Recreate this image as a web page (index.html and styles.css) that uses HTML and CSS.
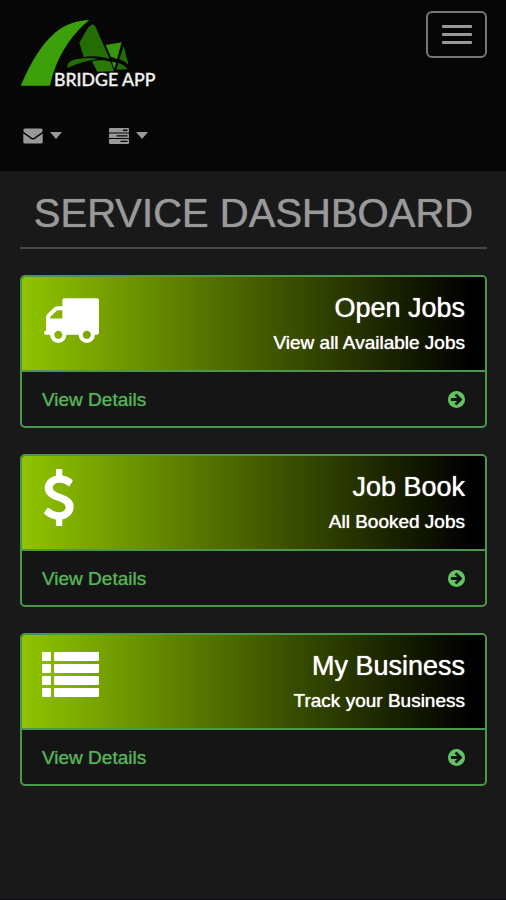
FILE: index.html
```html
<!DOCTYPE html>
<html lang="en">
<head>
  <meta charset="UTF-8">
  <meta name="viewport" content="width=device-width, initial-scale=1.0">
  <title>Bridge App - Service Dashboard</title>
  <link rel="stylesheet" href="styles.css">
</head>
<body>
  <!-- Shared icons -->
  <svg class="icon-defs" aria-hidden="true">
    <symbol id="arrow-right" viewBox="128 128 1536 1536">
      <path d="M1413 896q0-27-18-45l-91-91-362-362q-18-18-45-18t-45 18l-91 91q-18 18-18 45t18 45l189 189h-502q-26 0-45 19t-19 45v128q0 26 19 45t45 19h502l-189 189q-19 19-19 45t19 45l91 91q18 18 45 18t45-18l362-362 91-91q18-18 18-45zm251 0q0 209-103 385.500t-279.500 279.500-385.500 103-385.500-103-279.500-279.500-103-385.500 103-385.500 279.500-279.500 385.500-103 385.500 103 279.500 279.500 103 385.500z"/>
    </symbol>
  </svg>

  <header class="navbar">
    <div class="navbar-header">
      <a class="navbar-brand" href="#" aria-label="Bridge App">
        <svg class="logo" viewBox="30 27 414 210">
          <path fill="#3ca00a" d="M32 227C62 158 92 105 135 68C166 42 203 31 238 30C181 76 137 146 120 227Z"/>
          <path fill="#246c04" d="M235 52L247 43L256 49L299 147C275 139 247 137 221 141L208 98Z"/>
          <path fill="#246c04" d="M172 174C172 158 181 150 202 147C226 143 247 143 266 147C234 151 203 160 172 174Z"/>
          <path fill="#2a7906" d="M246 154C272 149 290 151 302 156L312 184L262 185Z"/>
          <path fill="#37980c" d="M287 105L335 97L321 148C315 144 309 142 303 141Z"/>
          <path fill="#37980c" d="M306 155L319 158L312 176Z"/>
          <path fill="#246c04" d="M341 108L356 165C347 156 338 152 328 148Z"/>
          <path fill="#246c04" d="M325 159C337 162 347 169 353 178L319 179Z"/>
          <text class="logo-text" x="132" y="227">BRIDGE APP</text>
        </svg>
      </a>
      <button type="button" class="navbar-toggle" aria-label="Toggle navigation">
        <span class="icon-bar"></span>
        <span class="icon-bar"></span>
        <span class="icon-bar"></span>
      </button>
    </div>
    <nav class="top-nav">
      <a href="#" aria-label="Messages">
        <svg class="nav-icon" viewBox="0 128 1792 1664">
          <path d="M1792 710v794q0 66-47 113t-113 47h-1472q-66 0-113-47t-47-113v-794q44 49 101 87 362 246 497 345 57 42 92.500 65.500t94.500 48 110 24.500h2q51 0 110-24.500t94.500-48 92.500-65.500q170-123 498-345 57-39 100-87zm0-294q0 79-49 151t-122 123q-376 261-468 325-10 7-42.500 31t-54 38.500-52 32.500-57.500 27-50 9h-2q-23 0-50-9t-57.500-27-52-32.500-54-38.500-42.500-31q-91-64-262-182.500t-205-142.500q-62-42-117-115.500t-55-136.500q0-78 41.500-130t118.500-52h1472q65 0 112.500 47t47.500 113z"/>
        </svg>
        <span class="caret"></span>
      </a>
      <a href="#" aria-label="Tasks">
        <svg class="nav-icon" viewBox="0 0 20 18">
          <path fill-rule="evenodd" d="M1 1h18q1 0 1 1v3q0 .6-1 .6H1q-1 0-1-.6V2q0-1 1-1zM14 2.600v1.400h4.500V2.600zM1 6.600h18q1 0 1 .6v3.200q0 .6-1 .6H1q-1 0-1-.6V7.200q0-.6 1-.6zM7.500 8.200v1.300h11V8.200zM1 12h18q1 0 1 .6V16q0 1-1 1H1q-1 0-1-1v-3.400q0-.6 1-.6zM11.500 13.800v1.300h7v-1.300z"/>
        </svg>
        <span class="caret"></span>
      </a>
    </nav>
  </header>

  <main class="dashboard">
    <h1 class="page-header">SERVICE DASHBOARD</h1>

    <section class="panel">
      <div class="panel-heading">
        <svg class="panel-icon" viewBox="0 0 1792 1792">
          <path d="M640 1408q0-52-38-90t-90-38-90 38-38 90 38 90 90 38 90-38 38-90zm-384-512h384v-256h-158q-13 0-22 9l-195 195q-9 9-9 22v30zm1280 512q0-52-38-90t-90-38-90 38-38 90 38 90 90 38 90-38 38-90zm256-1088v1024q0 15-4 26.500t-13.500 18.500-16.500 11.500-23.500 6-22.500 2-25.500 0-22.500-.5q0 106-75 181t-181 75-181-75-75-181h-384q0 106-75 181t-181 75-181-75-75-181h-64q-3 0-22.500.5t-25.500 0-22.500-2-23.500-6-16.500-11.500-13.500-18.500-4-26.500q0-26 19-45t45-19v-320q0-8-.5-35t0-38 2.500-34.500 6.500-37 14-30.500 22.500-30l198-198q19-19 50.500-32t58.500-13h160v-192q0-26 19-45t45-19h1024q26 0 45 19t19 45z"/>
        </svg>
        <div class="panel-info">
          <h2>Open Jobs</h2>
          <p>View all Available Jobs</p>
        </div>
      </div>
      <a class="panel-footer" href="#">
        <span>View Details</span>
        <svg class="arrow"><use href="#arrow-right"/></svg>
      </a>
    </section>

    <section class="panel">
      <div class="panel-heading">
        <svg class="panel-icon" viewBox="367 0 1792 1792">
          <path d="M1362 1185q0 153-99.500 263.500t-258.500 136.500v175q0 14-9 23t-23 9h-135q-13 0-22.500-9.500t-9.500-22.500v-175q-66-9-127.500-31t-101.500-44.500-74-48-46.500-37.500-17.500-18q-17-21-2-41l103-135q7-10 23-12 15-2 24 9l2 2q113 99 243 125 37 8 74 8 81 0 142.500-43t61.500-122q0-28-15-53t-33.500-42-58.500-37.500-66-32-80-32.500q-39-16-61.500-25t-61.500-26.500-62.500-31-56.500-35.500-53.500-42.500-43.500-49-35.500-58-21-66.500-8.500-78q0-138 98-242t255-134v-180q0-13 9.500-22.500t22.500-9.500h135q14 0 23 9t9 23v176q57 6 110.500 23t87 33.500 63.500 37.500 39 29 15 14q17 18 5 38l-81 146q-8 15-23 16-14 3-27-7-3-3-14.500-12t-39-26.500-58.500-32-74.500-26-85.500-11.500q-95 0-155 43t-60 111q0 26 8.500 48t29.500 41.500 39.500 33 56 31 60.500 27 70 27.500q53 20 81 31.500t76 35 75.500 42.500 62 50 53 63.500 31.500 76.500 13 94z"/>
        </svg>
        <div class="panel-info">
          <h2>Job Book</h2>
          <p>All Booked Jobs</p>
        </div>
      </div>
      <a class="panel-footer" href="#">
        <span>View Details</span>
        <svg class="arrow"><use href="#arrow-right"/></svg>
      </a>
    </section>

    <section class="panel">
      <div class="panel-heading">
        <svg class="panel-icon" viewBox="0 0 57 57">
          <rect x="0" y="4" width="9" height="9" rx="1"/>
          <rect x="12" y="4" width="45" height="9" rx="1"/>
          <rect x="0" y="16" width="9" height="9" rx="1"/>
          <rect x="12" y="16" width="45" height="9" rx="1"/>
          <rect x="0" y="28" width="9" height="9" rx="1"/>
          <rect x="12" y="28" width="45" height="9" rx="1"/>
          <rect x="0" y="40" width="9" height="9" rx="1"/>
          <rect x="12" y="40" width="45" height="9" rx="1"/>
        </svg>
        <div class="panel-info">
          <h2>My Business</h2>
          <p>Track your Business</p>
        </div>
      </div>
      <a class="panel-footer" href="#">
        <span>View Details</span>
        <svg class="arrow"><use href="#arrow-right"/></svg>
      </a>
    </section>
  </main>
</body>
</html>
```
FILE: styles.css
```css
* {
  box-sizing: border-box;
  margin: 0;
  padding: 0;
}

body {
  min-height: 100vh;
  font-family: "Liberation Sans", Arial, sans-serif;
  font-size: 19px;
  line-height: 27px;
  background-color: #191919;
  border-bottom: 1px solid #120810;
}

a {
  text-decoration: none;
}

.icon-defs {
  display: none;
}

/* Navbar */
.navbar {
  background-color: #060606;
  padding: 11px 19px 25px 20px;
}

.navbar-header {
  display: flex;
  justify-content: space-between;
  align-items: flex-start;
}

.navbar-brand {
  padding-top: 8px;
}

.logo {
  display: block;
  width: 138px;
  height: 70px;
}

.logo-text {
  font-family: Lato, sans-serif;
  font-size: 53px;
  font-weight: 500;
  fill: #f0f0f0;
  stroke: #f0f0f0;
  stroke-width: 1px;
}

.navbar-toggle {
  display: flex;
  flex-direction: column;
  align-items: center;
  justify-content: center;
  gap: 5px;
  width: 61px;
  height: 47px;
  background-color: transparent;
  border: 2px solid #777;
  border-radius: 6px;
  cursor: pointer;
}

.icon-bar {
  width: 30px;
  height: 3px;
  border-radius: 1px;
  background-color: #999;
}

.top-nav {
  display: flex;
  gap: 47px;
  padding: 36px 3px 0;
}

.top-nav a {
  display: flex;
  align-items: center;
  gap: 7px;
  height: 21px;
}

.nav-icon {
  width: 20px;
  height: 18px;
  fill: #999;
}

.caret {
  border-top: 7px solid #999;
  border-left: 6px solid transparent;
  border-right: 6px solid transparent;
}

/* Dashboard */
.dashboard {
  padding: 18px 19px 27px 20px;
}

.page-header {
  font-size: 40px;
  font-weight: normal;
  line-height: 48px;
  text-align: center;
  color: #999;
  text-shadow: 0 0 1px #999;
  padding-bottom: 10px;
  border-bottom: 2px solid #484848;
  margin-bottom: 26px;
}

.panel {
  border: 2px solid #4b964d;
  border-radius: 5px;
  background-color: #151515;
  overflow: hidden;
  margin-bottom: 26px;
}

.panel-heading {
  display: flex;
  justify-content: space-between;
  padding: 13px 20px 10px;
  color: #fff;
  background: linear-gradient(to right, #90c400, #000 97%);
  border-bottom: 2px solid #4b964d;
}

.panel-icon {
  width: 57px;
  height: 57px;
  fill: #fff;
}

.panel-info {
  text-align: right;
  text-shadow: 0 0 1px #fff;
}

.panel-info h2 {
  font-size: 27px;
  font-weight: normal;
  line-height: 36px;
}

.panel-info p {
  line-height: 34px;
}

.panel-footer {
  display: flex;
  justify-content: space-between;
  align-items: center;
  padding: 14px 20px 13px;
  color: #56b45a;
  text-shadow: 0 0 1px #469549;
}

.arrow {
  width: 17px;
  height: 17px;
  fill: #62c462;
}
```
